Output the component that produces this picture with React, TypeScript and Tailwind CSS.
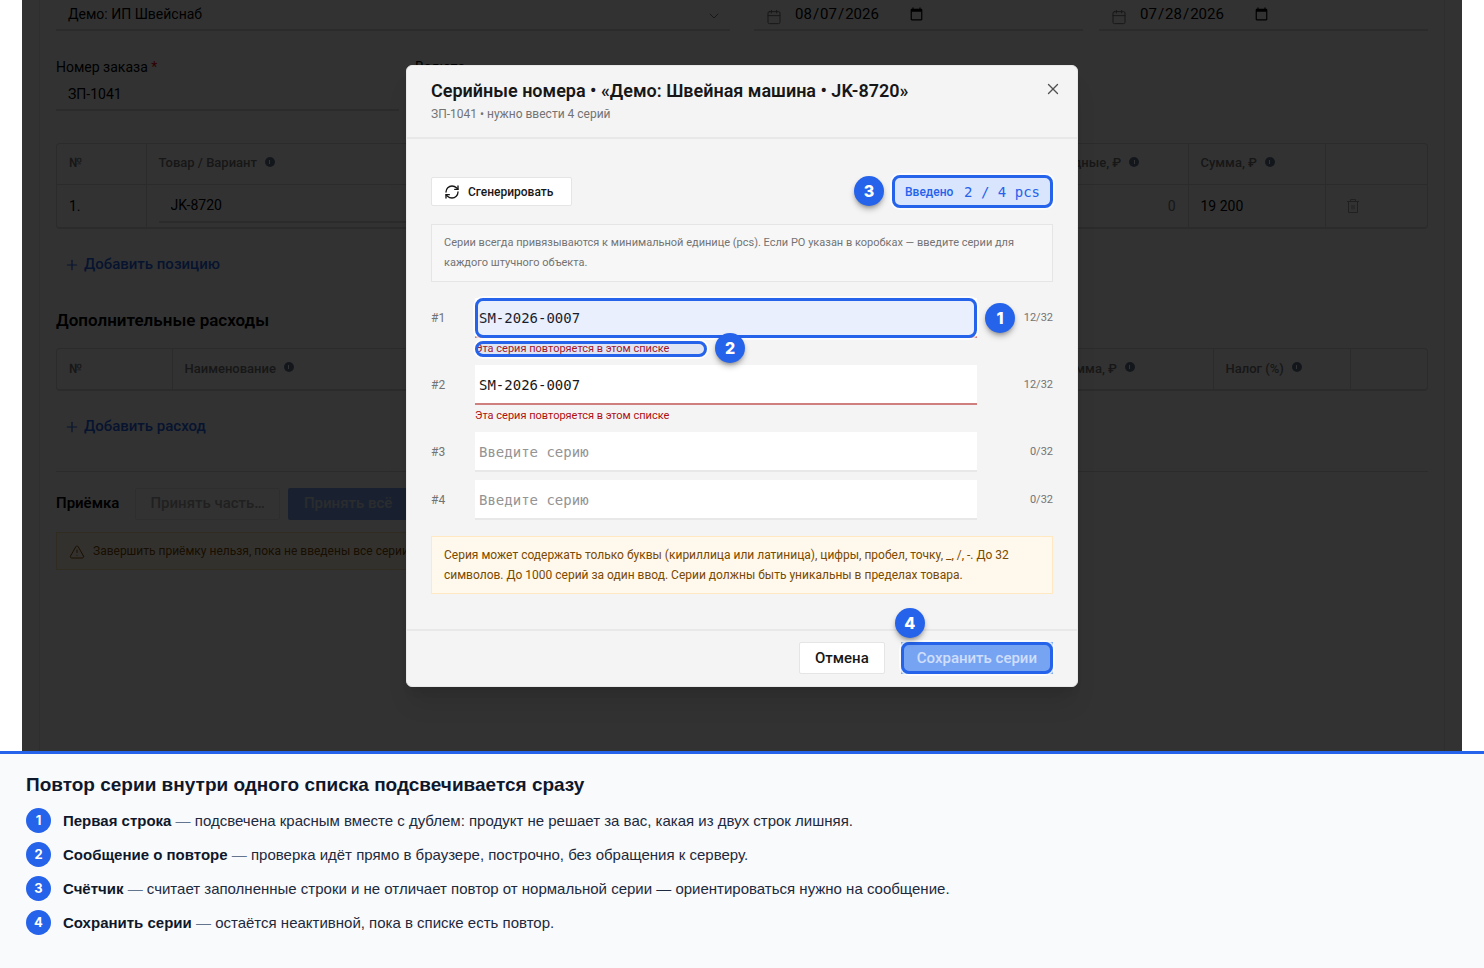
import { useState } from 'react';
import type { ReactNode } from 'react';
import { Calendar, ChevronDown, Plus, RefreshCw, TriangleAlert, X } from 'lucide-react';

const MAX_LENGTH = 32;
const DUPLICATE = 'Эта серия повторяется в этом списке';

const NOTES = [
  { title: 'Первая строка', text: 'подсвечена красным вместе с дублем: продукт не решает за вас, какая из двух строк лишняя.' },
  { title: 'Сообщение о повторе', text: 'проверка идёт прямо в браузере, построчно, без обращения к серверу.' },
  { title: 'Счётчик', text: 'считает заполненные строки и не отличает повтор от нормальной серии — ориентироваться нужно на сообщение.' },
  { title: 'Сохранить серии', text: 'остаётся неактивной, пока в списке есть повтор.' },
];

// Marker frame drawn over a part of the dialog
function Frame() {
  return (
    <span className="pointer-events-none absolute inset-0 rounded-lg border-3 border-[#2563eb] bg-[#2563eb]/10 ring-2 ring-white/70" />
  );
}

function Badge({ n, className }: { n: number; className: string }) {
  return (
    <span className={`pointer-events-none absolute z-10 flex size-[30px] items-center justify-center rounded-full bg-[#2563eb] font-['Inter'] text-[16px] font-extrabold text-white shadow-md shadow-black/30 ${className}`}>
      {n}
    </span>
  );
}

function Info() {
  return (
    <span className="mb-1 ml-2 inline-flex size-[10px] items-center justify-center rounded-full bg-slate-500 align-middle">
      <span className="h-1 w-px bg-white" />
    </span>
  );
}

function Trash() {
  return (
    <svg viewBox="0 0 14 16" className="h-4 w-[14px] fill-none stroke-neutral-400">
      <path d="M1 3.5h12M4.5 3.5v-2h5v2M2.5 3.5v11h9v-11M6 7v4.500M8 7v4.500" strokeLinejoin="round" />
    </svg>
  );
}

function Th({ children, className = '' }: { children?: ReactNode; className?: string }) {
  return (
    <th className={`h-10 border-l border-neutral-300 px-3 text-left text-[13px] font-medium text-neutral-500 first:border-l-0 ${className}`}>
      {children}
    </th>
  );
}

function DateField({ label, value }: { label: string; value: string }) {
  return (
    <div className="flex h-[31px] items-center border-b-2 border-neutral-300 pl-3">
      <Calendar className="mt-1 size-4 text-neutral-500" strokeWidth={1.5} />
      <input type="date" aria-label={label} defaultValue={value} className="ml-3 text-[15px] outline-none" />
    </div>
  );
}

function AddButton({ children }: { children: ReactNode }) {
  return (
    <button type="button" className="mt-5 flex h-8 items-center gap-1 px-2 text-[15px] font-medium text-[#2563eb]">
      <Plus className="size-4" strokeWidth={1.8} />
      {children}
    </button>
  );
}

function OrderPage() {
  return (
    <div className="h-full border-x border-neutral-200 bg-neutral-50 px-4 text-sm text-black">
      <div className="grid grid-cols-2 gap-6">
        <div className="relative">
          <select aria-label="Поставщик" className="h-[31px] w-full appearance-none border-b-2 border-neutral-300 pb-0.5 pl-3 outline-none">
            <option>Демо: ИП Швейснаб</option>
          </select>
          <ChevronDown className="pointer-events-none absolute top-2 right-2 size-4 text-neutral-500" strokeWidth={1.5} />
        </div>
        <div className="grid grid-cols-2 gap-4">
          <DateField label="Дата заказа" value="2026-08-07" />
          <DateField label="Дата поставки" value="2026-07-28" />
        </div>
      </div>

      <div className="mt-[26px] flex gap-4">
        <label className="block w-1/4">
          <span className="block leading-5">Номер заказа <span className="text-red-600">*</span></span>
          <input defaultValue="ЗП-1041" className="h-[34px] w-full border-b-2 border-neutral-300 px-3 pt-0.5 outline-none" />
        </label>
        <label className="block w-1/4">
          <span className="block leading-5">Валюта</span>
          <select className="h-[34px] w-full appearance-none border-b-2 border-neutral-300 px-3 outline-none">
            <option>RUB</option>
          </select>
        </label>
      </div>

      <div className="mt-8 rounded-sm border border-b-2 border-neutral-300">
        <table className="w-full table-fixed">
          <thead>
            <tr>
              <Th className="w-[89px]">№</Th>
              <Th>Товар / Вариант<Info /></Th>
              <Th className="w-[165px]">Накладные, ₽<Info /></Th>
              <Th className="w-[137px]">Сумма, ₽<Info /></Th>
              <Th className="w-[102px]" />
            </tr>
          </thead>
          <tbody>
            <tr className="border-t border-neutral-300">
              <td className="h-[43px] px-3">1.</td>
              <td className="border-l border-neutral-300 px-3">
                <input aria-label="Товар" defaultValue="JK-8720" className="block h-[34px] w-full border-b-2 border-neutral-300 px-3 outline-none" />
              </td>
              <td className="border-l border-neutral-300 px-3 text-right text-neutral-500">0</td>
              <td className="border-l border-neutral-300 px-3">19 200</td>
              <td className="border-l border-neutral-300 px-5">
                <button type="button" aria-label="Удалить" className="block"><Trash /></button>
              </td>
            </tr>
          </tbody>
        </table>
      </div>
      <AddButton>Добавить позицию</AddButton>

      <h2 className="mt-[27px] text-[17px] leading-6 font-semibold">Дополнительные расходы</h2>
      <div className="mt-4 rounded-sm border border-b-2 border-neutral-300">
        <table className="w-full table-fixed">
          <thead>
            <tr>
              <Th className="w-[115px]">№</Th>
              <Th>Наименование<Info /></Th>
              <Th className="w-[165px]">Сумма, ₽<Info /></Th>
              <Th className="w-[137px]">Налог (%)<Info /></Th>
              <Th className="w-[77px]" />
            </tr>
          </thead>
        </table>
      </div>
      <AddButton>Добавить расход</AddButton>

      <div className="mt-7 flex items-center gap-2 border-t border-neutral-300 pt-4">
        <h2 className="mr-2 text-[15px] font-semibold">Приёмка</h2>
        <button type="button" disabled className="h-8 rounded-xs border border-neutral-200 px-[14px] text-[15px] font-medium text-neutral-400">
          Принять часть…
        </button>
        <button type="button" disabled className="h-8 rounded-xs bg-[#7da6f0] px-4 text-[15px] font-medium text-[#d3d9e6]">
          Принять всё
        </button>
      </div>
      <div className="mt-3 flex h-[38px] w-fit items-center gap-2 border border-[#f5d9a8] bg-[#fff4e2] px-3 pt-px text-[12px] text-[#7a4a00]">
        <TriangleAlert className="size-4" strokeWidth={1.5} />
        Завершить приёмку нельзя, пока не введены все серии.
      </div>
    </div>
  );
}

function SerialsDialog() {
  const [serials, setSerials] = useState(['SM-2026-0007', 'SM-2026-0007', '', '']);

  const entered = serials.filter((s) => s !== '').length;
  const isDuplicate = (s: string) => s !== '' && serials.filter((x) => x === s).length > 1;

  const onChange = (index: number, value: string) => {
    setSerials(serials.map((s, i) => (i === index ? value : s)));
  };

  return (
    <div role="dialog" aria-labelledby="serials-title" className="w-full max-w-2xl rounded-md border border-[#e8e8e8] bg-[#f4f4f4] text-neutral-900 shadow-xl">
      <div className="flex justify-between border-b-2 border-[#e8e8e8] px-6 pt-[13px] pb-3">
        <div>
          <h1 id="serials-title" className="text-[18px] leading-6 font-semibold">
            Серийные номера • «Демо: Швейная машина • JK-8720»
          </h1>
          <p className="text-xs leading-[22px] text-neutral-500">ЗП-1041 • нужно ввести 4 серий</p>
        </div>
        <button type="button" aria-label="Закрыть" className="-mt-0.5 -mr-3 flex size-6 items-center justify-center text-neutral-600">
          <X className="size-[18px]" strokeWidth={1.8} />
        </button>
      </div>

      <div className="space-y-4 px-6 pt-9 pb-[35px]">
        <div className="flex items-center justify-between">
          <button type="button" className="flex h-[29px] w-[141px] items-center gap-2 rounded-xs border border-neutral-200 bg-white px-3 pt-px text-[12px] font-medium">
            <RefreshCw className="size-4" strokeWidth={2} />
            Сгенерировать
          </button>
          <div className="relative flex h-[33px] w-[161px] items-center justify-between bg-[#eef3ff] px-[13px] pt-px text-[#2563eb]">
            <span className="text-[12px] font-medium">Введено</span>
            <span className="font-['DejaVu_Sans_Mono',monospace] text-sm">{entered} / {serials.length} pcs</span>
            <Frame />
            <Badge n={3} className="top-px right-full mr-2" />
          </div>
        </div>

        <p className="border border-neutral-200 bg-[#f7f7f7] px-3 py-2 text-[11px] leading-5 text-neutral-500">
          Серии всегда привязываются к минимальной единице (pcs). Если PO указан в коробках — введите серии для каждого штучного объекта.
        </p>

        <div className="space-y-2">
          {serials.map((serial, i) => {
            const duplicate = isDuplicate(serial);
            return (
              <div key={i} className="grid grid-cols-[28px_1fr_60px] gap-x-4">
                <label htmlFor={`serial-${i}`} className="text-[12px] leading-10 text-neutral-500">#{i + 1}</label>
                <div>
                  <div className="relative">
                    <input
                      id={`serial-${i}`}
                      value={serial}
                      onChange={(e) => onChange(i, e.target.value)}
                      maxLength={MAX_LENGTH}
                      placeholder="Введите серию"
                      className={`block h-10 w-full border-b-2 bg-white px-1 pt-0.5 font-['DejaVu_Sans_Mono',monospace] text-sm outline-none placeholder:text-[#949494] ${duplicate ? 'border-[#d07f7f]' : 'border-[#e8e8e8]'}`}
                    />
                    {i === 0 && <Frame />}
                    {i === 0 && <Badge n={1} className="top-[5px] left-full ml-2" />}
                  </div>
                  {duplicate && (
                    <p className="relative mt-[3px] w-[232px] text-[11px] leading-4 text-[#b01010]">
                      {DUPLICATE}
                      {i === 0 && <Frame />}
                      {i === 0 && <Badge n={2} className="-top-2 left-full ml-2" />}
                    </p>
                  )}
                </div>
                <span className="text-right text-[11px] leading-10 text-neutral-500">{serial.length}/{MAX_LENGTH}</span>
              </div>
            );
          })}
        </div>

        <p className="border border-[#ffe8c2] bg-[#fff8ec] px-3 py-2 text-[12px] leading-5 text-[#7a4a00]">
          Серия может содержать только буквы (кириллица или латиница), цифры, пробел, точку, _, /, -. До 32 символов. До 1000 серий за один ввод. Серии должны быть уникальны в пределах товара.
        </p>
      </div>

      <div className="flex justify-end gap-4 border-t-2 border-[#e8e8e8] px-6 pt-[11px] pb-3 text-[15px] font-medium">
        <button type="button" className="h-8 rounded-xs border border-neutral-200 bg-white px-[15px] pt-px">Отмена</button>
        <div className="relative">
          <button type="button" disabled className="block h-8 bg-[#7fabf3] px-4 pt-px text-[#e3ecfd]">Сохранить серии</button>
          <Frame />
          <Badge n={4} className="bottom-full -left-1.5 mb-1" />
        </div>
      </div>
    </div>
  );
}

export default function App() {
  return (
    <div className="bg-white font-['Roboto',sans-serif]">
      <div className="relative mx-[22px] h-[751px] overflow-hidden bg-neutral-50 px-[17px]">
        <OrderPage />
        <div className="absolute inset-0 flex items-center justify-center bg-black/80">
          <SerialsDialog />
        </div>
      </div>

      <section className="border-t-3 border-[#2563eb] bg-slate-50 px-[26px] pt-[19px] pb-[33px] font-['Liberation_Sans',sans-serif]">
        <h2 className="text-[19px] leading-6 font-bold text-slate-900">Повтор серии внутри одного списка подсвечивается сразу</h2>
        <ol className="mt-[11px] space-y-[9px]">
          {NOTES.map((note, i) => (
            <li key={note.title} className="flex items-center gap-3 text-[15px] leading-[25px] text-slate-800">
              <span className="flex size-[25px] shrink-0 items-center justify-center rounded-full bg-[#2563eb] font-['Inter'] text-[13px] font-bold text-white">
                {i + 1}
              </span>
              <span>
                <b className="text-slate-900">{note.title}</b> <span className="text-slate-500">—</span> {note.text}
              </span>
            </li>
          ))}
        </ol>
      </section>
    </div>
  );
}
